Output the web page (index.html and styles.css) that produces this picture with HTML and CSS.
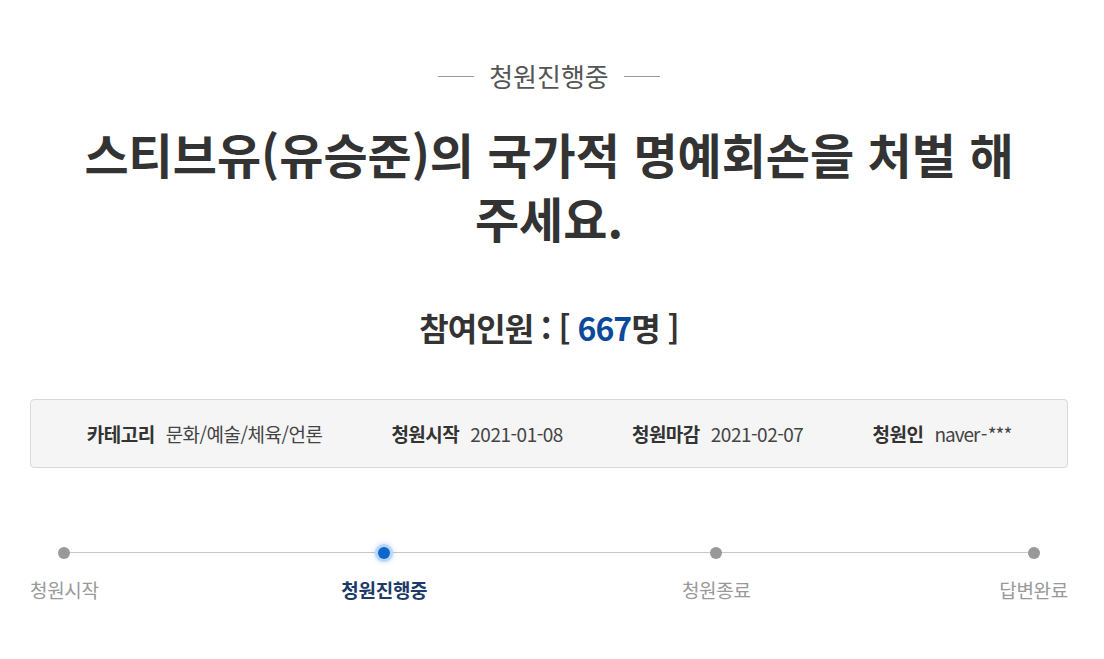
FILE: index.html
```html
<!DOCTYPE html>
<html lang="ko">
<head>
<meta charset="utf-8">
<link rel="stylesheet" href="styles.css">
</head>
<body>
<div class="page">
  <div class="status"><span>청원진행중</span></div>
  <h1 class="title">스티브유(유승준)의 국가적 명예회손을 처벌 해<br>주세요.</h1>
  <h2 class="count">참여인원 : [ <span class="num">667</span>명 ]</h2>
  <ul class="info">
    <li><strong>카테고리</strong>문화/예술/체육/언론</li>
    <li><strong>청원시작</strong>2021-01-08</li>
    <li><strong>청원마감</strong>2021-02-07</li>
    <li><strong>청원인</strong><span class="user">naver - ***</span></li>
  </ul>
  <div class="steps">
    <div class="track"></div>
    <div class="step first"><span class="dot"></span><span class="label">청원시작</span></div>
    <div class="step active"><span class="dot"></span><span class="label">청원진행중</span></div>
    <div class="step"><span class="dot"></span><span class="label">청원종료</span></div>
    <div class="step last"><span class="dot"></span><span class="label">답변완료</span></div>
  </div>
</div>
</body>
</html>
```

FILE: styles.css
```css
* { box-sizing: border-box; }
html, body { margin: 0; padding: 0; background: #fff; }
body {
  font-family: "Noto Sans CJK KR", "Noto Sans", sans-serif;
  color: #333;
}
.page {
  padding: 61px 36px 0 30px;
  width: 1104px;
}
.status {
  display: flex;
  justify-content: center;
  align-items: center;
  gap: 15px;
  font-size: 26px;
  line-height: 30px;
  color: #555;
  letter-spacing: 0;
}
.status::before, .status::after {
  content: "";
  width: 36px;
  height: 1px;
  background: #999;
}
.title {
  margin: 30px 0 0;
  text-align: center;
  font-size: 48px;
  line-height: 64px;
  font-weight: 700;
  color: #333;
  letter-spacing: 0;
}
.count {
  margin: 58px 0 0;
  text-align: center;
  font-size: 32px;
  line-height: 40px;
  font-weight: 700;
  color: #333;
  letter-spacing: -1px;
}
.count .num { color: #0b4a9b; }
.info {
  list-style: none;
  margin: 52px 0 0;
  padding: 20px 0;
  display: flex;
  justify-content: center;
  gap: 69px;
  border: 1px solid #d9d9d9;
  border-radius: 4px;
  background: #f5f5f5;
  font-size: 19px;
  line-height: 27px;
  color: #444;
  letter-spacing: -0.5px;
}
.info strong {
  font-weight: 700;
  color: #333;
  margin-right: 11px;
}
.info .user { word-spacing: -3px; letter-spacing: -1px; }
.steps {
  position: relative;
  margin-top: 79px;
  display: flex;
  justify-content: space-between;
}
.track {
  position: absolute;
  left: 34px;
  right: 34px;
  top: 5px;
  height: 1px;
  background: #c8c8c8;
}
.step {
  position: relative;
  display: flex;
  flex-direction: column;
  align-items: center;
  gap: 18px;
}
.step.active { left: -6px; }
.dot {
  width: 12px;
  height: 12px;
  border-radius: 50%;
  background: #999;
}
.step.active .dot {
  background: #0d66cc;
  box-shadow: 0 0 0 3px #b8d6f7, 0 0 4px 4px rgba(120,170,235,0.35);
}
.label {
  font-size: 19px;
  line-height: 26px;
  color: #999;
  letter-spacing: -0.3px;
}
.step.active .label {
  font-weight: 700;
  color: #1d3a6a;
}
```
